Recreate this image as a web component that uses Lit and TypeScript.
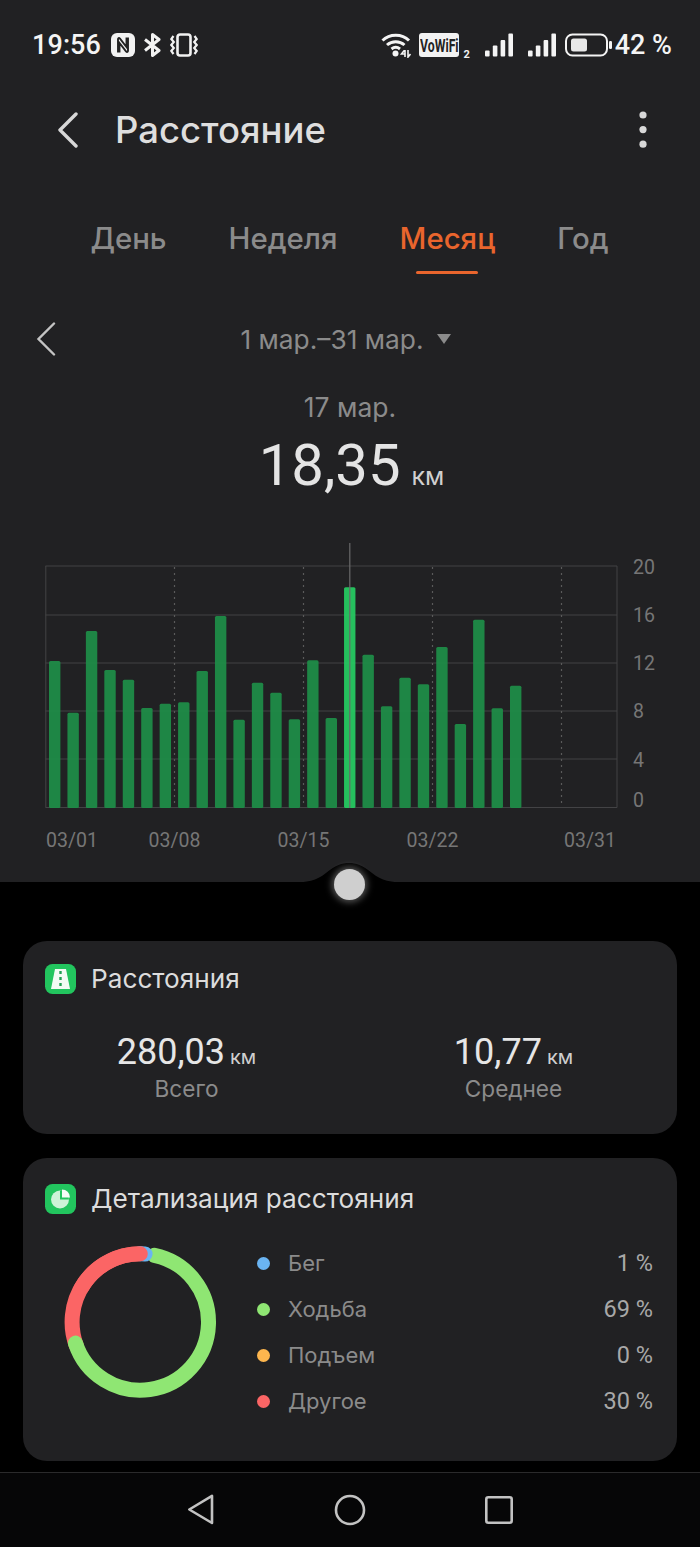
import { LitElement, html, css, svg } from "lit";
import { customElement } from "lit/decorators.js";

const TOPS = [393,548,303,420,449,534,521,517,423,258,569,458,488,568,391,564,172,374,529,443,463,351,582,269,535,467];
const GRID = [566, 615, 663, 711, 759, 807.5];
const YLAB: [string, number][] = [["20",567],["16",615],["12",663],["8",711],["4",760],["0",800]];
const DOTS = [174.5, 303.5, 432.5, 561.5];
const XLAB: [string, number, string][] = [["03/01",46,"start"],["03/08",174.5,"middle"],["03/15",303.5,"middle"],["03/22",432.5,"middle"],["03/31",616,"end"]];
const LEGEND = [["Бег","1 %","#6ab4f2"],["Ходьба","69 %","#8fe673"],["Подъем","0 %","#fdb64e"],["Другое","30 %","#fb6565"]];
const SIGNAL = [[0,17.5,6],[7.8,12.5,11],[15.6,7,16.5],[23.4,0.5,23]];

function arc(from: number, to: number, r = 68.2, cx = 76.3, cy = 76) {
  const p = (a: number) => {
    const t = (a * Math.PI) / 180;
    return `${(cx + r * Math.sin(t)).toFixed(2)} ${(cy - r * Math.cos(t)).toFixed(2)}`;
  };
  const large = to - from > 180 ? 1 : 0;
  return `M${p(from)} A${r} ${r} 0 ${large} 1 ${p(to)}`;
}

@customElement("app-root")
export class AppRoot extends LitElement {
  static styles = css`
    :host { display: block; width: 700px; height: 1547px; background: #000; overflow: hidden;
      font-family: Inter, "Noto Sans", sans-serif; color: #e2e2e2; }
    .top { background: #212123; height: 882px; display: flex; flex-direction: column; }
    .status { height: 90px; display: flex; justify-content: space-between; align-items: center; padding: 0 28px 0 32px; box-sizing: border-box; }
    .group { display: flex; align-items: center; }
    .time { font: 500 27px Roboto, sans-serif; color: #f4f4f4; margin-right: 10px; letter-spacing: .1px; }
    .pct { font: 500 27px Roboto, sans-serif; color: #f4f4f4; margin-left: 3px; }
    .m8 { margin-right: 8px; }
    .m15 { margin-right: 15px; }
    .m10 { margin-right: 9px; }
    .vow { width: 40px; height: 24px; background: #f2f2f2; border-radius: 3px; color: #222; font: 700 18px Roboto, sans-serif;
      display: flex; align-items: center; justify-content: center; overflow: hidden; }
    .vow span { display: block; transform: scaleX(.68); white-space: nowrap; }
    .sub2 { font: 700 11px Roboto, sans-serif; color: #f2f2f2; align-self: flex-end; margin: 0 15px 0 4px; line-height: 12px; }
    .header { height: 80px; display: flex; align-items: center; padding: 0 52px 0 57px; }
    .header h1 { flex: 1; margin: -1px 0 0 36px; font-size: 36.5px; font-weight: 500; color: #dedede; }
    .tabs { height: 105px; display: flex; justify-content: center; gap: 62px; padding-top: 49px; padding-right: 1px; box-sizing: border-box; }
    .tab { position: relative; font-size: 29.4px; line-height: 40px; color: #8b8b8b; font-weight: 500; height: 40px; }
    .tab.on { color: #e9652d; }
    .tab.on::after { content: ""; position: absolute; left: 16px; right: 17px; bottom: -15px; height: 3px; background: #e9652d; border-radius: 2px; }
    .range { height: 46px; margin-top: 41px; padding-right: 8px; display: flex; align-items: center; justify-content: center; position: relative; font-size: 26.3px; color: #8b8b8b; gap: 14px; }
    .range .back { position: absolute; left: 36px; top: 6px; }
    .tri { width: 0; height: 0; border-left: 7px solid transparent; border-right: 7px solid transparent; border-top: 10px solid #8b8b8b; }
    .day { text-align: center; font-size: 26.5px; color: #8b8b8b; line-height: 30px; margin-top: 30px; }
    .big { display: flex; justify-content: center; align-items: baseline; gap: 11px; color: #e4e4e4; font: 400 58px/62px Roboto, sans-serif; margin-top: 12px; padding-left: 3px; }
    .big small { font: 400 25px Inter, sans-serif; color: #d0d0d0; }
    .chart { display: block; margin-top: 39px; }
    .chart text { font: 400 19.5px Roboto, sans-serif; fill: #767676; }
    .bottom { position: relative; height: 665px; padding: 59px 23px 0; box-sizing: border-box; display: flex; flex-direction: column; gap: 24px; }
    .notch { position: absolute; left: 290px; top: -20px; }
    .knob { position: absolute; left: 333.5px; top: -13px; width: 31px; height: 31px; border-radius: 50%; background: #cfcfcf; box-shadow: 0 0 7px 2px rgba(255,255,255,.35); }
    .card { background: #212123; border-radius: 24px; }
    .c1 { height: 193px; }
    .c2 { height: 303px; }
    .ct { display: flex; align-items: center; gap: 15px; padding: 22px 0 0 22px; font-size: 26.2px; color: #dcdcdc; line-height: 32px; height: 32px; }
    .c2 .ct { padding-top: 25px; }
    .stats { display: grid; grid-template-columns: 1fr 1fr; margin-top: 36px; text-align: center; }
    .val { font: 400 36px/42px Roboto, sans-serif; color: #e6e6e6; }
    .val small { font: 400 20px Inter, sans-serif; color: #cfcfcf; margin-left: 5px; }
    .lbl { font-size: 22.6px; color: #8b8b8b; line-height: 28px; margin-top: 2px; }
    .det { display: flex; padding: 0 24px 0 41px; margin-top: 31px; align-items: flex-start; }
    .legend { flex: 1; margin-left: 40px; display: flex; flex-direction: column; margin-top: -6px; }
    .row { height: 46px; display: flex; align-items: center; font-size: 22px; color: #8b8b8b; }
    .dot { width: 13px; height: 13px; border-radius: 50%; margin-right: 18px; }
    .row b { flex: 1; font-weight: 400; }
    .row span { font: 400 23.5px Roboto, sans-serif; color: #a8a8a8; }
    .nav { position: absolute; left: 0; right: 0; top: 590px; height: 75px; background: #060607; border-top: 1px solid #2a2a2b; box-sizing: border-box; display: flex; justify-content: center; align-items: center; gap: 117px; padding-right: 1px; }
  `;

  chart() {
    return html`<svg class="chart" width="700" height="325" viewBox="0 535 700 325">
      ${GRID.map((y) => svg`<line x1="45.5" x2="617" y1=${y} y2=${y} stroke="#434345" stroke-width="1.2"/>`)}
      <line x1="45.8" x2="45.8" y1="566" y2="807.5" stroke="#434345"/>
      <line x1="617" x2="617" y1="566" y2="807.5" stroke="#434345"/>
      ${DOTS.map((x) => svg`<line x1=${x} x2=${x} y1="567" y2="807" stroke="#5a5a5a" stroke-width="1.2" stroke-dasharray="2 4"/>`)}
      ${TOPS.map((t, i) => {
        const y = 530 + t / 3;
        const x = 49 + i * 18.44;
        const on = i === 16;
        return svg`<rect x=${x.toFixed(2)} y=${y.toFixed(2)} width="11.4" height=${(808 - y).toFixed(2)} rx="1.5" fill=${on ? "#25c961" : "#1e8c47"} fill-opacity=".94"/>`;
      })}
      <line x1="349.8" x2="349.8" y1="543" y2="808" stroke="#6a6a6a" stroke-width="1.2"/>
      ${YLAB.map(([s, y]) => svg`<text x="633" y=${y + 7}>${s}</text>`)}
      ${XLAB.map(([s, x, a]) => svg`<text x=${x} y="847" text-anchor=${a}>${s}</text>`)}
    </svg>`;
  }

  render() {
    return html`
      <div class="top">
        <div class="status">
          <div class="group">
            <span class="time">19:56</span>
            <svg class="m8" width="24" height="24" viewBox="0 0 24 24">
              <rect width="24" height="24" rx="6" fill="#f2f2f2"/>
              <path d="M7 19.5V6.5C7 5 8 4.6 9 5.6L15.5 14V4.5M17 4.5V17.5C17 19 16 19.4 15 18.4L8.5 10V19.5" fill="none" stroke="#222" stroke-width="1.9"/>
            </svg>
            <svg class="m8" width="19" height="24" viewBox="0 0 19 24">
              <path d="M2 6.5L16 17.5L9.5 22.5V1.5L16 6.5L2 17.5" fill="none" stroke="#f2f2f2" stroke-width="3" stroke-linejoin="round"/>
            </svg>
            <svg width="28" height="24" viewBox="0 0 28 24">
              <rect x="7.5" y="1.5" width="13" height="21" rx="2.5" fill="none" stroke="#f2f2f2" stroke-width="2.6"/>
              <path d="M3.5 3L1.3 6L3.8 9L1.3 12L3.8 15L1.3 18L3.5 21M24.5 3L26.7 6L24.2 9L26.7 12L24.2 15L26.7 18L24.5 21" fill="none" stroke="#f2f2f2" stroke-width="2.2"/>
            </svg>
          </div>
          <div class="group">
            <svg class="m8" width="30" height="26" viewBox="0 0 30 26">
              <path d="M1.5 8.5C8.5 1.5 21 1.5 28 8.5M6 13C11 8.5 18.5 8.5 23.5 13M10.5 17C13 15 16.5 15 19 17" fill="none" stroke="#f4f4f4" stroke-width="3"/>
              <circle cx="14.5" cy="21.5" r="3" fill="#f4f4f4"/>
              <path d="M24 25V18M23.2 18.5L20.5 22H24M27 18V25L29.5 22" fill="none" stroke="#f4f4f4" stroke-width="1.6"/>
            </svg>
            <div class="vow"><span>VoWiFi</span></div>
            <span class="sub2">2</span>
            <svg class="m15" width="28" height="24" viewBox="0 0 28 24">
              ${SIGNAL.map(([x,y,h]) => svg`<rect x=${x} y=${y} width="4.6" height=${h} rx="1" fill="#f4f4f4"/>`)}
            </svg>
            <svg class="m10" width="28" height="24" viewBox="0 0 28 24">
              ${SIGNAL.map(([x,y,h]) => svg`<rect x=${x} y=${y} width="4.6" height=${h} rx="1" fill="#f4f4f4"/>`)}
            </svg>
            <svg width="47" height="24" viewBox="0 0 47 24">
              <rect x="1" y="1.5" width="41" height="21" rx="6.5" fill="none" stroke="#f4f4f4" stroke-width="2"/>
              <rect x="6" y="5.5" width="16" height="13" rx="2.5" fill="#e8e8e8"/>
              <rect x="44" y="8" width="3" height="8" rx="1.2" fill="#f4f4f4"/>
            </svg>
            <span class="pct">42 %</span>
          </div>
        </div>

        <div class="header">
          <svg width="22" height="36" viewBox="0 0 22 36">
            <path d="M19 2L3 18L19 34" fill="none" stroke="#d8d8d8" stroke-width="3.4" stroke-linecap="round" stroke-linejoin="round"/>
          </svg>
          <h1>Расстояние</h1>
          <svg width="10" height="40" viewBox="0 0 10 40">
            <circle cx="5" cy="5" r="3.6" fill="#d8d8d8"/><circle cx="5" cy="19.6" r="3.6" fill="#d8d8d8"/><circle cx="5" cy="34.2" r="3.6" fill="#d8d8d8"/>
          </svg>
        </div>

        <div class="tabs">
          <span class="tab">День</span>
          <span class="tab">Неделя</span>
          <span class="tab on">Месяц</span>
          <span class="tab">Год</span>
        </div>

        <div class="range">
          <svg class="back" width="20" height="34" viewBox="0 0 20 34">
            <path d="M18 1.5L2.5 17L18 32.5" fill="none" stroke="#c4c4c4" stroke-width="2.4" stroke-linecap="round"/>
          </svg>
          <span>1 мар.–31 мар.</span><i class="tri"></i>
        </div>

        <div class="day">17 мар.</div>
        <div class="big">18,35<small>км</small></div>
        ${this.chart()}
      </div>

      <div class="bottom">
        <svg class="notch" width="118" height="21" viewBox="0 0 118 21">
          <path d="M0 20.5C18 20.5 26 19 36 11C46 3 52 1 59 1C66 1 72 3 82 11C92 19 100 20.5 118 20.5V21H0Z" fill="#000"/>
        </svg>
        <div class="knob"></div>

        <section class="card c1">
          <div class="ct">
            <svg width="31" height="30" viewBox="0 0 31 30">
              <rect width="31" height="30" rx="7.5" fill="#22c55e"/>
              <path d="M10 5H21L25 25H6Z" fill="#f2fbf4"/>
              <path d="M15.5 7V23" stroke="#22a052" stroke-width="2.4" stroke-dasharray="3 3"/>
            </svg>
            Расстояния
          </div>
          <div class="stats">
            <div><div class="val">280,03<small>км</small></div><div class="lbl">Всего</div></div>
            <div><div class="val">10,77<small>км</small></div><div class="lbl">Среднее</div></div>
          </div>
        </section>

        <section class="card c2">
          <div class="ct">
            <svg width="31" height="30" viewBox="0 0 31 30">
              <rect width="31" height="30" rx="7.5" fill="#22c55e"/>
              <circle cx="15" cy="15.5" r="9" fill="#cdf3d8"/>
              <path d="M15 15.5V6.5A9 9 0 0 1 24 15.5Z" fill="#22c55e"/>
              <path d="M17 13.5V5.5A8 8 0 0 1 25 13.5Z" fill="#f4fcf6"/>
            </svg>
            Детализация расстояния
          </div>
          <div class="det">
            <svg width="153" height="152" viewBox="0 0 153 152">
              <g fill="none" stroke-width="15" stroke-linecap="round">
                <path d=${arc(250, 359.5)} stroke="#fb6565"/>
                <path d=${arc(12, 252)} stroke="#8fe673"/>
                <path d=${arc(0, 4)} stroke="#6ab4f2"/>
                <path d=${arc(300, 360)} stroke="#fb6565"/>
              </g>
            </svg>
            <div class="legend">
              ${LEGEND.map(([n, v, c]) => html`<div class="row"><i class="dot" style="background:${c}"></i><b>${n}</b><span>${v}</span></div>`)}
            </div>
          </div>
        </section>

        <nav class="nav">
          <svg width="32" height="32" viewBox="0 0 32 32">
            <path d="M27 1.8V29L4.3 15.5Z" fill="none" stroke="#c2c2c2" stroke-width="2.6" stroke-linejoin="round"/>
          </svg>
          <svg width="32" height="32" viewBox="0 0 32 32">
            <circle cx="16" cy="16" r="14" fill="none" stroke="#c2c2c2" stroke-width="2.6"/>
          </svg>
          <svg width="32" height="32" viewBox="0 0 32 32">
            <rect x="3.3" y="3.3" width="25.4" height="25.4" rx="2" fill="none" stroke="#c2c2c2" stroke-width="2.6"/>
          </svg>
        </nav>
      </div>
    `;
  }
}
